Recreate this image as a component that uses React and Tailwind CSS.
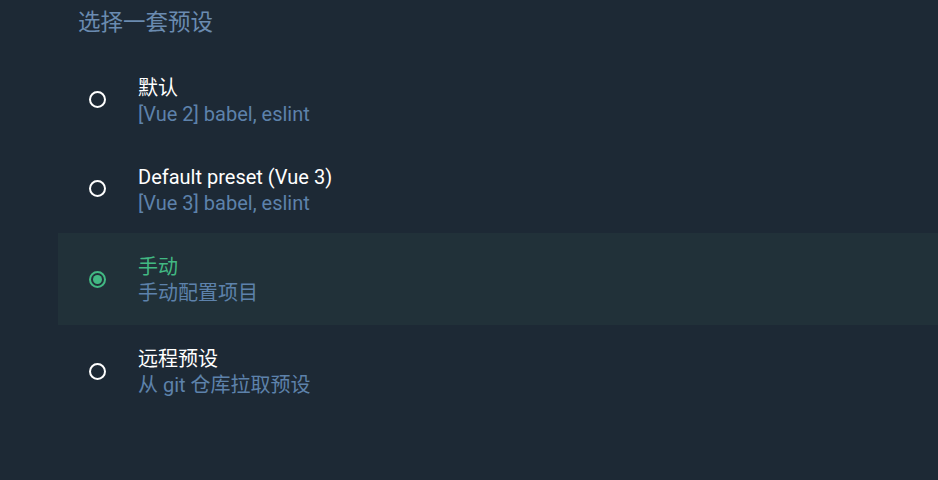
import React from "react";

const items = [
  { title: "默认", sub: "[Vue 2] babel, eslint", h: "h-[89px]" },
  { title: "Default preset (Vue 3)", sub: "[Vue 3] babel, eslint", h: "h-[89px]" },
  { title: "手动", sub: "手动配置项目", h: "h-[92px]", selected: true },
  { title: "远程预设", sub: "从 git 仓库拉取预设", h: "h-[92px]" },
];

function Radio({ selected }) {
  if (selected) {
    return (
      <div className="w-[17px] h-[17px] rounded-full border-2 border-[#42b983] flex items-center justify-center shrink-0">
        <div className="w-[9px] h-[9px] rounded-full bg-[#42b983]" />
      </div>
    );
  }
  return <div className="w-[17px] h-[17px] rounded-full border-2 border-white shrink-0" />;
}

export default function App() {
  return (
    <div
      className="w-[938px] h-[480px] bg-[#1d2935] overflow-hidden"
      style={{ fontFamily: 'Roboto, "Noto Sans CJK SC", sans-serif' }}
    >
      <div className="pl-[78px] h-[44px] leading-[44px] text-[22.5px] text-[#6a8bb0]">选择一套预设</div>
      <div className="mt-[11px] pl-[58px] flex flex-col">
        {items.map((it) => (
          <div
            key={it.title}
            className={`${it.h} flex items-center pl-[31px] ${it.selected ? "bg-[#213139]" : ""}`}
          >
            <Radio selected={it.selected} />
            <div className="ml-[32px] pt-[3px] flex flex-col">
              <div
                className={`text-[20px] leading-[23px] ${it.selected ? "text-[#42b983]" : "text-white"}`}
              >
                {it.title}
              </div>
              <div className="mt-[3px] text-[20px] leading-[23px] text-[#5d82ab]">{it.sub}</div>
            </div>
          </div>
        ))}
      </div>
    </div>
  );
}
